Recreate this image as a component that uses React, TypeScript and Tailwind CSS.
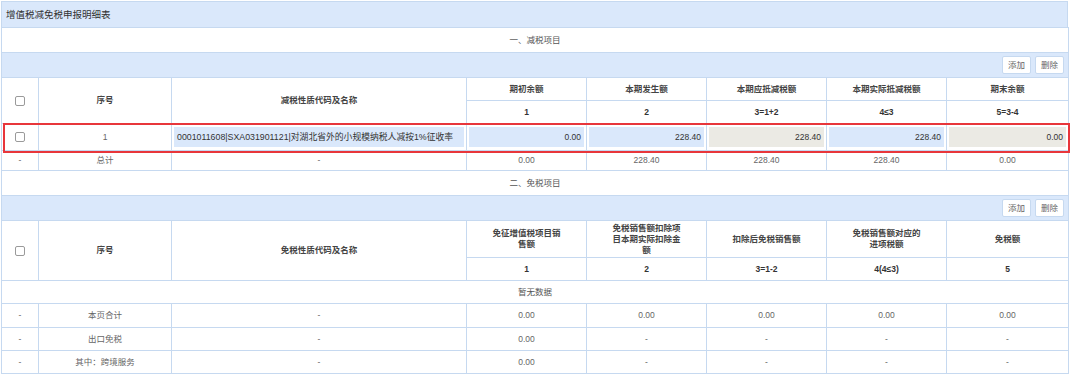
import React from "react"

const line = "border border-[#c6d9f0]"

function Check() {
  return <span className="inline-block w-[10px] h-[10px] border border-[#9a9a9a] rounded-[2px] bg-white align-middle" />
}

function Btn({ label }: { label: string }) {
  return (
    <span className="inline-flex items-center justify-center h-[18px] px-[5px] bg-white border border-[#c6d9f0] rounded-[2px] text-[#666]">
      {label}
    </span>
  )
}

function Field({ value, readOnly, left }: { value: string; readOnly?: boolean; left?: boolean }) {
  return (
    <div
      className={`h-[20px] mx-[2px] px-[3px] flex items-center overflow-hidden whitespace-nowrap text-[#333] ${
        readOnly ? "bg-[#ebeae4]" : "bg-[#dae8fb]"
      } ${left ? "justify-start text-[8.8px]" : "justify-end"}`}
    >
      {value}
    </div>
  )
}

function SectionRow({ title }: { title: string }) {
  return (
    <>
      <tr className="h-[25px]">
        <td colSpan={8} className={`${line} text-center text-[#555]`}>{title}</td>
      </tr>
      <tr className="h-[25px] bg-[#dae8fb]">
        <td colSpan={8} className={line}>
          <div className="flex justify-end gap-[4px] pr-[4px]">
            <Btn label="添加" />
            <Btn label="删除" />
          </div>
        </td>
      </tr>
    </>
  )
}

function PlainRow({ cells, h = "h-[23px]" }: { cells: string[]; h?: string }) {
  return (
    <tr className={h}>
      {cells.map((c, i) => (
        <td key={i} className={`${line} text-center text-[#666]`}>{c}</td>
      ))}
    </tr>
  )
}

export default function App() {
  const head1 = ["期初余额", "本期发生额", "本期应抵减税额", "本期实际抵减税额", "期末余额"]
  const nums1 = ["1", "2", "3=1+2", "4≤3", "5=3-4"]
  const head2 = ["免征增值税项目销售额", "免税销售额扣除项目本期实际扣除金额", "扣除后免税销售额", "免税销售额对应的进项税额", "免税额"]
  const nums2 = ["1", "2", "3=1-2", "4(4≤3)", "5"]

  return (
    <div className="relative w-[1080px] h-[378px] bg-white font-['Liberation_Sans','Noto_Sans_CJK_SC',sans-serif] text-[8.5px] leading-[11px]">
      <div className="ml-px mt-px w-[1067px]">
        <div className="h-[26px] flex items-center pl-[4px] bg-[#dae8fb] border border-b-0 border-[#c6d9f0] text-[9.5px] text-[#333]">
          增值税减免税申报明细表
        </div>
        <table className="table-fixed border-collapse w-[1067px]">
          <colgroup>
            <col className="w-[37px]" />
            <col className="w-[133px]" />
            <col className="w-[295px]" />
            <col className="w-[120px]" />
            <col className="w-[120px]" />
            <col className="w-[120px]" />
            <col className="w-[120px]" />
            <col className="w-[122px]" />
          </colgroup>
          <tbody>
            <SectionRow title="一、减税项目" />
            <tr className="h-[23px]">
              <td rowSpan={2} className={`${line} text-center`}><Check /></td>
              <td rowSpan={2} className={`${line} text-center font-semibold text-[#444]`}>序号</td>
              <td rowSpan={2} className={`${line} text-center font-semibold text-[#444]`}>减税性质代码及名称</td>
              {head1.map((h) => (
                <td key={h} className={`${line} text-center font-semibold text-[#444]`}>{h}</td>
              ))}
            </tr>
            <tr className="h-[23px]">
              {nums1.map((n) => (
                <td key={n} className={`${line} text-center font-bold text-[#333]`}>{n}</td>
              ))}
            </tr>
            <tr className="h-[27px]">
              <td className={`${line} text-center`}><Check /></td>
              <td className={`${line} text-center text-[#666]`}>1</td>
              <td className={line}><Field left value="0001011608|SXA031901121|对湖北省外的小规模纳税人减按1%征收率" /></td>
              <td className={line}><Field value="0.00" /></td>
              <td className={line}><Field value="228.40" /></td>
              <td className={line}><Field value="228.40" readOnly /></td>
              <td className={line}><Field value="228.40" /></td>
              <td className={line}><Field value="0.00" readOnly /></td>
            </tr>
            <PlainRow h="h-[20px]" cells={["-", "总计", "-", "0.00", "228.40", "228.40", "228.40", "0.00"]} />

            <SectionRow title="二、免税项目" />
            <tr className="h-[37px]">
              <td rowSpan={2} className={`${line} text-center`}><Check /></td>
              <td rowSpan={2} className={`${line} text-center font-semibold text-[#444]`}>序号</td>
              <td rowSpan={2} className={`${line} text-center font-semibold text-[#444]`}>免税性质代码及名称</td>
              {head2.map((h) => (
                <td key={h} className={`${line} text-center font-semibold text-[#444]`}>
                  <div className="max-w-[70px] mx-auto">{h}</div>
                </td>
              ))}
            </tr>
            <tr className="h-[23px]">
              {nums2.map((n) => (
                <td key={n} className={`${line} text-center font-bold text-[#333]`}>{n}</td>
              ))}
            </tr>
            <tr className="h-[23px]">
              <td colSpan={8} className={`${line} text-center text-[#555]`}>暂无数据</td>
            </tr>
            <PlainRow h="h-[24px]" cells={["-", "本页合计", "-", "0.00", "0.00", "0.00", "0.00", "0.00"]} />
            <PlainRow cells={["-", "出口免税", "-", "0.00", "-", "-", "-", "-"]} />
            <PlainRow cells={["-", "其中：跨境服务", "-", "0.00", "-", "-", "-", "-"]} />
          </tbody>
        </table>
      </div>

      {/* highlighted row */}
      <div className="absolute left-[3px] top-[122px] w-[1067px] h-[30px] border-2 border-[#e8363b] pointer-events-none" />
    </div>
  )
}
